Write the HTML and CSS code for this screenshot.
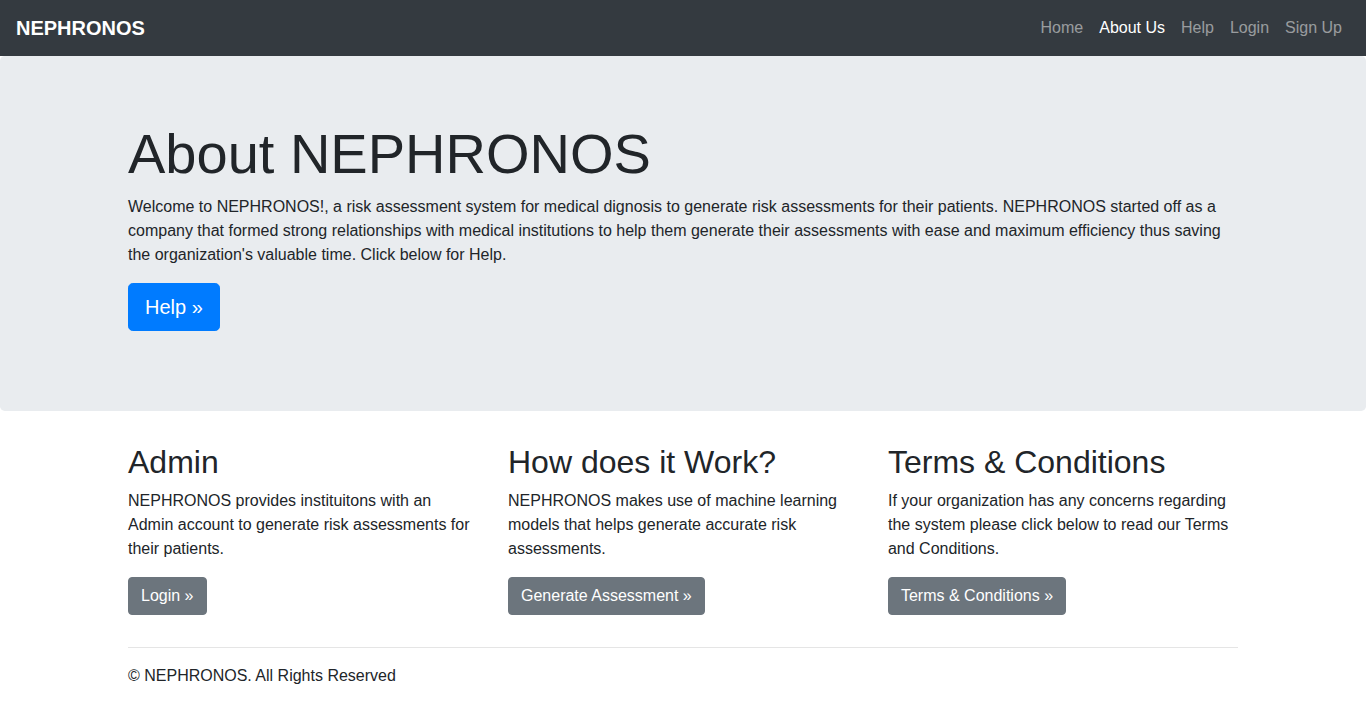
FILE: index.html
```html
<!DOCTYPE html>
<html lang="en">
<head>
<meta charset="utf-8">
<title>About NEPHRONOS</title>
<link rel="stylesheet" href="styles.css">
</head>
<body>
<nav class="navbar">
  <a class="brand" href="#">NEPHRONOS</a>
  <ul class="nav">
    <li><a class="nav-link" href="#">Home</a></li>
    <li><a class="nav-link active" href="#">About Us</a></li>
    <li><a class="nav-link" href="#">Help</a></li>
    <li><a class="nav-link" href="#">Login</a></li>
    <li><a class="nav-link" href="#">Sign Up</a></li>
  </ul>
</nav>
<main>
  <div class="jumbotron">
    <div class="container">
      <h1 class="display">About NEPHRONOS</h1>
      <p>Welcome to NEPHRONOS!, a risk assessment system for medical dignosis to generate risk assessments for their patients. NEPHRONOS started off as a company that formed strong relationships with medical institutions to help them generate their assessments with ease and maximum efficiency thus saving the organization's valuable time. Click below for Help.</p>
      <p><a class="btn btn-primary btn-lg" href="#">Help &raquo;</a></p>
    </div>
  </div>
  <div class="container">
    <div class="row">
      <div class="col">
        <h2>Admin</h2>
        <p>NEPHRONOS provides instituitons with an Admin account to generate risk assessments for their patients.</p>
        <p><a class="btn btn-secondary" href="#">Login &raquo;</a></p>
      </div>
      <div class="col">
        <h2>How does it Work?</h2>
        <p>NEPHRONOS makes use of machine learning models that helps generate accurate risk assessments.</p>
        <p><a class="btn btn-secondary" href="#">Generate Assessment &raquo;</a></p>
      </div>
      <div class="col">
        <h2>Terms &amp; Conditions</h2>
        <p>If your organization has any concerns regarding the system please click below to read our Terms and Conditions.</p>
        <p><a class="btn btn-secondary" href="#">Terms &amp; Conditions &raquo;</a></p>
      </div>
    </div>
    <hr>
  </div>
</main>
<footer class="container">
  <p>&copy; NEPHRONOS. All Rights Reserved</p>
</footer>
</body>
</html>
```
FILE: styles.css
```css
* { box-sizing: border-box; }
html, body { margin: 0; padding: 0; }
body {
  font-family: "Liberation Sans", Arial, sans-serif;
  font-size: 16px;
  line-height: 1.5;
  color: #212529;
  background: #fff;
}
a { text-decoration: none; }
p { margin: 0 0 16px 0; }
h1, h2 { margin: 0 0 8px 0; font-weight: 500; line-height: 1.2; }
h2 { font-size: 32px; }

.navbar {
  background: #343a40;
  height: 56px;
  padding: 8px 16px;
  display: flex;
  align-items: center;
  justify-content: space-between;
}
.brand {
  color: #fff;
  font-size: 20px;
  font-weight: 700;
  line-height: 30px;
  padding: 5px 0;
}
.nav {
  list-style: none;
  margin: 0;
  padding: 0;
  display: flex;
}
.nav-link {
  display: block;
  padding: 8px;
  color: rgba(255, 255, 255, 0.5);
}
.nav-link.active { color: #fff; }

.jumbotron {
  background: #e9ecef;
  padding: 64px 32px 63.5px;
  margin-bottom: 32px;
  border-radius: 4.8px;
}
.jumbotron .container { padding: 0 15px; }
.container {
  width: 1140px;
  margin: 0 auto;
  padding: 0 15px;
}
.display {
  font-size: 56px;
  font-weight: 300;
  line-height: 1.2;
}
.row {
  display: flex;
  margin: 0 -15px;
}
.col {
  flex: 0 0 33.3333%;
  padding: 0 15px;
}
.btn {
  display: inline-block;
  color: #fff;
  border: 1px solid transparent;
  padding: 6px 12px;
  font-size: 16px;
  line-height: 1.5;
  border-radius: 4px;
}
.btn-lg {
  padding: 8px 16px;
  font-size: 20px;
  border-radius: 4.8px;
}
.btn-primary { background: #007bff; border-color: #007bff; }
.btn-secondary { background: #6c757d; border-color: #6c757d; }
hr {
  margin: 16px 0;
  border: 0;
  border-top: 1px solid rgba(0, 0, 0, 0.1);
}
```
